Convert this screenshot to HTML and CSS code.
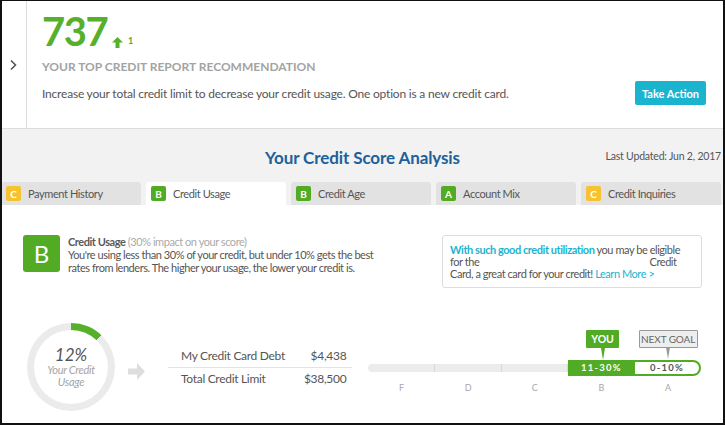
FILE: index.html
```html
<!DOCTYPE html>
<html lang="en">
  <head>
    <meta charset="UTF-8" />
    <title>Credit Score Analysis</title>
    <link rel="stylesheet" href="styles.css">
  </head>
  <body>
    <div class="frame">
      <section class="top">
        <div class="side">
          <svg width="8" height="12" viewBox="0 0 8 12"><path d="M2 1.5 L6.5 6 L2 10.5" fill="none" stroke="#555" stroke-width="1.6"/></svg>
        </div>
        <div class="rec">
          <div class="score">
            <span class="scoreNum">737</span>
            <svg class="upArrow" width="11" height="11" viewBox="0 0 11 11"><path d="M5.5 0 L11 5.5 L7.5 5.5 L7.5 11 L3.5 11 L3.5 5.5 L0 5.5 Z" fill="#56b02a"/></svg>
            <span class="scoreDelta">1</span>
          </div>
          <h2 class="recTitle">YOUR TOP CREDIT REPORT RECOMMENDATION</h2>
          <div class="recRow">
            <p>Increase your total credit limit to decrease your credit usage. One option is a new credit card.</p>
            <button class="actionBtn">Take Action</button>
          </div>
        </div>
      </section>

      <section class="analysis">
        <div class="analysisHead">
          <h1>Your Credit Score Analysis</h1>
          <span class="updated">Last Updated: Jun 2, 2017</span>
        </div>
        <div class="tabs">
          <div class="tab"><span class="grade gradeC">C</span>Payment History</div>
          <div class="tab active"><span class="grade gradeB">B</span>Credit Usage</div>
          <div class="tab"><span class="grade gradeB">B</span>Credit Age</div>
          <div class="tab"><span class="grade gradeB">A</span>Account Mix</div>
          <div class="tab"><span class="grade gradeC">C</span>Credit Inquiries</div>
        </div>
      </section>

      <section class="detail">
        <div class="usageRow">
          <div class="bigGrade">B</div>
          <div class="usageText">
            <p><span class="usageName">Credit Usage</span> <span class="impact">(30% impact on your score)</span></p>
            <p>You're using less than 30% of your credit, but under 10% gets the best rates from lenders. The higher your usage, the lower your credit is.</p>
          </div>
          <div class="offer">
            <span class="hl">With such good credit utilization</span> you may be eligible for the <span class="blank"></span>Credit Card, a great card for your credit! <a href="#">Learn More &gt;</a>
          </div>
        </div>

        <div class="statsRow">
          <div class="ring">
            <div class="ringInner">
              <span class="pct">12%</span>
              <span class="ringLabel">Your Credit<br>Usage</span>
            </div>
          </div>
          <svg class="nextArrow" width="17" height="17" viewBox="0 0 17 17"><path d="M0 5.5 H9 V0 L17 8.5 L9 17 V11.5 H0 Z" fill="#dedede"/></svg>
          <table class="debt">
            <tr>
              <td>My Credit Card Debt</td>
              <td class="amt">$4,438</td>
            </tr>
            <tr>
              <td>Total Credit Limit</td>
              <td class="amt">$38,500</td>
            </tr>
          </table>
          <div class="scale">
            <div class="step">
              <div class="seg segGray segFirst"></div>
              <span class="letter">F</span>
            </div>
            <div class="step">
              <div class="seg segGray"></div>
              <span class="letter">D</span>
            </div>
            <div class="step">
              <div class="seg segGray"></div>
              <span class="letter">C</span>
            </div>
            <div class="step">
              <span class="tip tipYou">YOU</span>
              <div class="seg segYou">11-30%</div>
              <span class="letter">B</span>
            </div>
            <div class="step">
              <span class="tip tipGoal">NEXT GOAL</span>
              <div class="seg segGoal">0-10%</div>
              <span class="letter">A</span>
            </div>
          </div>
        </div>
      </section>
    </div>
  </body>
</html>
```

FILE: styles.css
```css
* {
  margin: 0;
  padding: 0;
  box-sizing: border-box;
}

body {
  font-family: Lato, "Open Sans", sans-serif;
  background-color: #ffffff;
  color: #555555;
}

.frame {
  width: 725px;
  height: 425px;
  border: 2px solid #111111;
  border-top-width: 1px;
  display: flex;
  flex-direction: column;
  overflow: hidden;
}

/* top recommendation block */
.top {
  display: flex;
  height: 128px;
  border-bottom: 1px solid #dddddd;
}

.side {
  width: 25px;
  border-right: 1px solid #dddddd;
  display: flex;
  align-items: center;
  justify-content: center;
  padding-right: 2px;
}

.rec {
  flex: 1;
  padding: 11px 17px 0 15px;
}

.score {
  display: flex;
  align-items: flex-end;
  height: 38px;
}

.scoreNum {
  font-size: 40px;
  font-weight: 700;
  color: #56b02a;
  line-height: 38px;
  letter-spacing: -1.5px;
}

.upArrow {
  margin: 0 0 2px 5px;
}

.scoreDelta {
  font-size: 9px;
  font-weight: 700;
  color: #56b02a;
  margin: 0 0 4px 5px;
}

.recTitle {
  font-size: 12px;
  font-weight: 700;
  color: #a3a3a3;
  margin-top: 9px;
}

.recRow {
  display: flex;
  justify-content: space-between;
  align-items: center;
  margin-top: 7px;
}

.recRow p {
  font-size: 12px;
  letter-spacing: -0.2px;
}

.actionBtn {
  background-color: #1bb4cf;
  color: white;
  border: none;
  border-radius: 2px;
  font-family: inherit;
  font-size: 11px;
  font-weight: 700;
  width: 71px;
  height: 24px;
}

/* analysis header + tabs */
.analysis {
  background-color: #f2f2f2;
}

.analysisHead {
  height: 53px;
  display: flex;
  align-items: center;
  justify-content: center;
  position: relative;
}

.analysisHead h1 {
  font-size: 17px;
  font-weight: 700;
  color: #20609a;
  padding-top: 3px;
  letter-spacing: -0.1px;
}

.updated {
  position: absolute;
  right: 2px;
  top: 21px;
  font-size: 10.5px;
  letter-spacing: -0.2px;
}

.tabs {
  display: flex;
  gap: 5px;
  padding-right: 2px;
  margin-left: -1px;
}

.tab {
  flex: 1;
  height: 23px;
  background-color: #e2e2e2;
  border-radius: 3px 3px 0 0;
  display: flex;
  align-items: center;
  padding-left: 5px;
  font-size: 11px;
  letter-spacing: -0.4px;
}

.tab.active {
  background-color: #ffffff;
}

.grade {
  width: 15px;
  height: 15px;
  border-radius: 2px;
  color: white;
  font-size: 10px;
  font-weight: 700;
  letter-spacing: 0;
  display: flex;
  align-items: center;
  justify-content: center;
  margin-right: 7px;
}

.gradeC {
  background-color: #f6c22e;
}

.gradeB {
  background-color: #52ab24;
}

/* detail panel */
.detail {
  flex: 1;
  padding: 30px 0 0 21px;
}

.usageRow {
  display: flex;
  align-items: flex-start;
}

.bigGrade {
  width: 37px;
  height: 37px;
  border-radius: 3px;
  background-color: #52ab24;
  color: white;
  font-size: 24px;
  display: flex;
  align-items: center;
  justify-content: center;
}

.usageText {
  width: 312px;
  margin-left: 8px;
  font-size: 11px;
  line-height: 13px;
  letter-spacing: -0.45px;
}

.usageName {
  font-weight: 700;
  color: #5a5a5a;
}

.impact {
  color: #aaaaaa;
}

.offer {
  width: 260px;
  height: 53px;
  margin-left: 62px;
  border: 1px solid #dddddd;
  border-radius: 3px;
  padding: 8px 7px 0 7px;
  font-size: 11px;
  line-height: 12px;
  letter-spacing: -0.45px;
}

.hl {
  color: #1bb4cf;
  font-weight: 700;
}

.blank {
  display: inline-block;
  width: 168px;
}

.offer a {
  color: #1bb4cf;
  text-decoration: none;
}

.statsRow {
  display: flex;
  align-items: center;
  margin-top: 35px;
  margin-left: 4px;
}

.ring {
  width: 88px;
  height: 88px;
  border-radius: 50%;
  background: conic-gradient(#56b02a 0 12%, #ebebeb 12% 100%);
  display: flex;
  align-items: center;
  justify-content: center;
}

.ringInner {
  width: 74px;
  height: 74px;
  border-radius: 50%;
  background-color: #ffffff;
  display: flex;
  flex-direction: column;
  align-items: center;
  justify-content: center;
  font-style: italic;
  text-align: center;
}

.pct {
  font-size: 17px;
  color: #555555;
  line-height: 18px;
}

.ringLabel {
  font-size: 11px;
  color: #a5a5a5;
  line-height: 12px;
  letter-spacing: -0.3px;
}

.nextArrow {
  margin: 8px 0 0 13px;
}

.debt {
  width: 178px;
  margin-left: 23px;
  border-collapse: collapse;
  font-size: 12px;
  letter-spacing: -0.3px;
  white-space: nowrap;
}

.debt td {
  height: 22px;
  padding: 0 6px 0 13px;
}

.debt tr:first-child td {
  border-bottom: 1px solid #e3e3e3;
}

.amt {
  text-align: right;
}

/* grade scale bar */
.scale {
  display: flex;
  margin-left: 16px;
  width: 333px;
  padding-top: 18px;
}

.step {
  flex: 1;
  display: flex;
  flex-direction: column;
  align-items: center;
  position: relative;
}

.seg {
  width: 100%;
  height: 16px;
  display: flex;
  align-items: center;
  justify-content: center;
  font-size: 9.5px;
  font-weight: 700;
  letter-spacing: 1.2px;
}

.segGray {
  height: 8px;
  margin: 4px 0;
  background-color: #ececec;
  border-right: 1px solid #d8d8d8;
}

.segFirst {
  border-radius: 4px 0 0 4px;
}

.segYou {
  background-color: #52ab24;
  color: white;
}

.segGoal {
  border: 2px solid #52ab24;
  border-left: none;
  border-radius: 0 8px 8px 0;
  color: #555555;
}

.letter {
  font-size: 9px;
  color: #a8a8a8;
  margin-top: 6px;
}

.tip {
  position: absolute;
  top: -30px;
  font-size: 10.5px;
  font-weight: 700;
  height: 18px;
  display: flex;
  align-items: center;
  justify-content: center;
  border-radius: 1px;
  white-space: nowrap;
}

.tip::after {
  content: "";
  position: absolute;
  top: 100%;
  left: 50%;
  margin-left: -2px;
  border-left: 2px solid transparent;
  border-right: 2px solid transparent;
  border-top: 12px solid;
}

.tipYou {
  background-color: #52ab24;
  color: white;
  width: 33px;
  left: 18px;
}

.tipYou::after {
  border-top-color: #52ab24;
}

.tipGoal {
  background-color: #eeeeee;
  color: #666666;
  border: 1.5px solid #999999;
  font-size: 10px;
  font-weight: 400;
  left: 4px;
  width: 59px;
  letter-spacing: -0.1px;
}

.tipGoal::after {
  border-top-color: #999999;
}
```
